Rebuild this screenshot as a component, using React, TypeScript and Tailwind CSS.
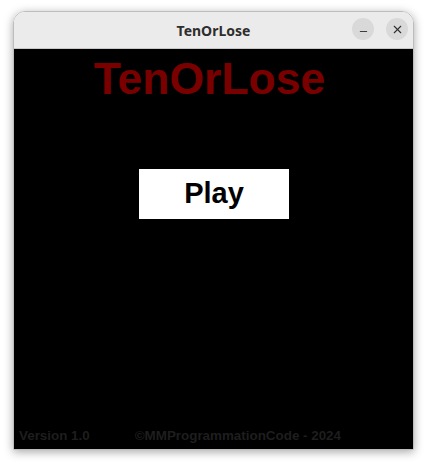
import { X, Minus } from 'lucide-react';

export default function App() {
    return (
        <div className="w-[428px] h-[466px] bg-white overflow-hidden pt-[11px] pl-[13px]">
            <div className="w-[401px] rounded-t-[12px] border border-[#bdbdbd] shadow-[0_2px_10px_rgba(0,0,0,0.35)] overflow-hidden">
                {/* title bar */}
                <div className="relative h-[37px] bg-[#ebebeb] border-b border-[#c8c8c8] flex items-center justify-center">
                    <span className="text-[14px] font-bold text-[#2e2e2e]" style={{ fontFamily: '"Noto Sans", sans-serif' }}>
                        TenOrLose
                    </span>
                    <div className="absolute right-[5px] top-[6px] flex gap-[12px]">
                        <div className="w-[22px] h-[22px] rounded-full bg-[#d9d9d9] flex items-center justify-center">
                            <Minus size={11} strokeWidth={2} className="text-[#2e2e2e] mt-[4px]" />
                        </div>
                        <div className="w-[22px] h-[22px] rounded-full bg-[#d9d9d9] flex items-center justify-center">
                            <X size={13} strokeWidth={2} className="text-[#2e2e2e]" />
                        </div>
                    </div>
                </div>

                {/* game area */}
                <div
                    className="w-[400px] h-[400px] bg-black flex flex-col items-center pt-[8px] pb-[7px]"
                    style={{ fontFamily: '"Liberation Sans", Arial, sans-serif' }}
                >
                    <h1 className="text-[44.5px] leading-none font-bold text-[#7a0000] -ml-[9px]">TenOrLose</h1>

                    <button className="mt-[67px] w-[150px] h-[50px] bg-white text-black text-[29px] font-bold leading-none flex items-center justify-center">
                        Play
                    </button>

                    <div className="mt-auto self-stretch flex pl-[5px] gap-[45px] text-[13.4px] leading-none font-bold text-[#1e1e1e]">
                        <span>Version 1.0</span>
                        <span>©MMProgrammationCode - 2024</span>
                    </div>
                </div>
            </div>
        </div>
    );
}
